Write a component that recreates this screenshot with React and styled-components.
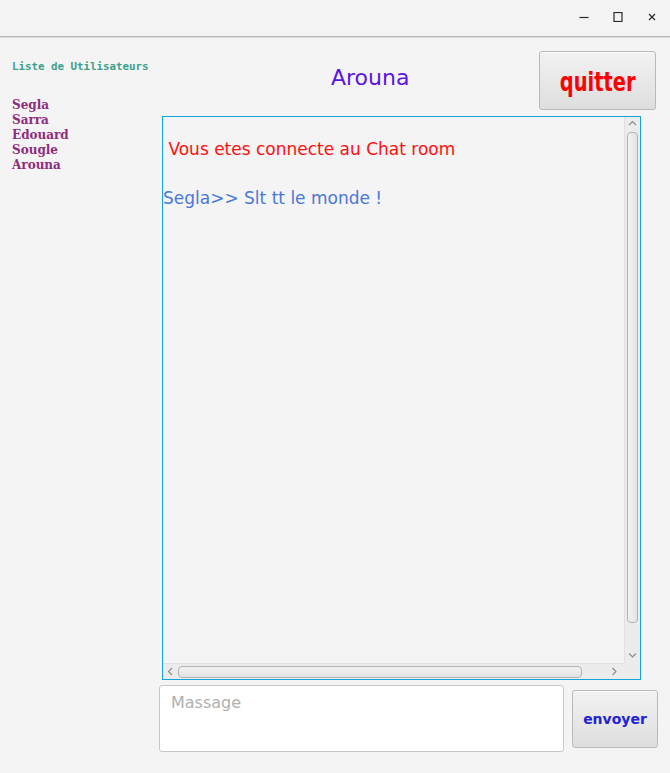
import React from 'react';
import styled, { createGlobalStyle } from 'styled-components';

const users = ['Segla', 'Sarra', 'Edouard', 'Sougle', 'Arouna'];

const messages = [
	{ text: ' Vous etes connecte au Chat room', color: '#ff1010' },
	{ text: 'Segla>> Slt tt le monde !', color: '#4a78d8' },
];

function Chevron({ dir }) {
	const paths = {
		up: 'M1 5 L4.5 1.5 L8 5',
		down: 'M1 1.5 L4.5 5 L8 1.5',
		left: 'M5 1 L1.5 4.5 L5 8',
		right: 'M1.5 1 L5 4.5 L1.5 8',
	};
	const vertical = dir === 'up' || dir === 'down';
	return (
		<svg width={vertical ? 9 : 7} height={vertical ? 7 : 9} viewBox={vertical ? '0 0 9 7' : '0 0 7 9'}>
			<path d={paths[dir]} fill="none" stroke="#8a8a8a" strokeWidth="1.1" />
		</svg>
	);
}

export default function App() {
	return (
		<>
			<GlobalStyle />
			<Window>
				<TitleBar>
					<WinButton aria-label="minimize">
						<svg width="10" height="10" viewBox="0 0 10 10">
							<path d="M0.5 5.5 H9.5" stroke="#2a2a2a" strokeWidth="1.2" />
						</svg>
					</WinButton>
					<WinButton aria-label="maximize">
						<svg width="10" height="10" viewBox="0 0 10 10">
							<rect x="1" y="0.5" width="8" height="9" fill="none" stroke="#2a2a2a" strokeWidth="1.2" />
						</svg>
					</WinButton>
					<WinButton aria-label="close">
						<svg width="10" height="10" viewBox="0 0 10 10">
							<path d="M2 2 L8 8 M8 2 L2 8" stroke="#2a2a2a" strokeWidth="1.2" />
						</svg>
					</WinButton>
				</TitleBar>
				<Body>
					<Sidebar>
						<SidebarTitle>Liste de Utilisateurs</SidebarTitle>
						<UserList>
							{users.map(u => (
								<UserItem key={u}>{u}</UserItem>
							))}
						</UserList>
					</Sidebar>
					<Main>
						<Header>
							<RoomTitle>Arouna</RoomTitle>
							<QuitButton>
								<QuitLabel>quitter</QuitLabel>
							</QuitButton>
						</Header>
						<ChatBox>
							<Feed>
								{messages.map((m, i) => (
									<Message key={i} color={m.color}>
										{m.text}
									</Message>
								))}
							</Feed>
							<VScroll>
								<Chevron dir="up" />
								<VThumb />
								<Chevron dir="down" />
							</VScroll>
							<HScroll>
								<Chevron dir="left" />
								<HThumb />
								<Chevron dir="right" />
							</HScroll>
							<Corner />
						</ChatBox>
						<Composer>
							<MessageInput placeholder="Massage" />
							<SendButton>envoyer</SendButton>
						</Composer>
					</Main>
				</Body>
			</Window>
		</>
	);
}

const GlobalStyle = createGlobalStyle`
	html, body {
		margin: 0;
		padding: 0;
		background: #f4f4f4;
	}
	* {
		box-sizing: border-box;
	}
`;

const Window = styled.div`
	width: 670px;
	height: 773px;
	display: flex;
	flex-direction: column;
	background: #f4f4f4;
	overflow: hidden;
`;

const TitleBar = styled.div`
	height: 37px;
	flex-shrink: 0;
	display: flex;
	justify-content: flex-end;
	align-items: center;
	padding: 0 8px 2px 0;
	gap: 14px;
	background: #f3f3f3;
	border-bottom: 1px solid #b8b8b8;
	box-shadow: 0 1px 0 #dcdcdc;
	border-radius: 6px 6px 0 0;
`;

const WinButton = styled.div`
	width: 20px;
	height: 20px;
	display: flex;
	align-items: center;
	justify-content: center;
`;

const Body = styled.div`
	flex: 1;
	display: grid;
	grid-template-columns: 159px 1fr;
`;

const Sidebar = styled.div`
	padding: 23px 0 0 12px;
	display: flex;
	flex-direction: column;
`;

const SidebarTitle = styled.div`
	font-family: 'DejaVu Sans Mono', monospace;
	font-size: 10.8px;
	font-weight: bold;
	line-height: 13px;
	color: #3e9f8c;
	white-space: nowrap;
`;

const UserList = styled.div`
	margin-top: 25px;
	display: flex;
	flex-direction: column;
`;

const UserItem = styled.div`
	font-family: 'DejaVu Serif', serif;
	font-size: 12px;
	font-weight: bold;
	line-height: 15px;
	color: #8f2c7d;
`;

const Main = styled.div`
	display: flex;
	flex-direction: column;
	padding-top: 14px;
`;

const Header = styled.div`
	height: 59px;
	display: flex;
	align-items: flex-start;
`;

const RoomTitle = styled.div`
	margin: 14px 0 0 172px;
	font-family: 'DejaVu Sans', sans-serif;
	font-size: 22px;
	line-height: 26px;
	color: #5a14e6;
`;

const BaseButton = styled.div`
	display: flex;
	align-items: center;
	justify-content: center;
	border: 1px solid #b9b9b9;
	border-radius: 3px;
	background: linear-gradient(#f2f2f2, #dedede);
	box-shadow: inset 0 1px 0 #fafafa;
`;

const QuitButton = styled(BaseButton)`
	margin: 0 14px 0 auto;
	width: 117px;
	height: 59px;
`;

const QuitLabel = styled.span`
	display: inline-block;
	font-family: 'DejaVu Sans', sans-serif;
	font-size: 27px;
	font-weight: bold;
	color: #ff0000;
	transform: scaleX(0.72);
	margin-top: 1px;
`;

const ChatBox = styled.div`
	margin: 6px 0 0 3px;
	width: 479px;
	height: 564px;
	border: 1px solid #16a2dc;
	display: grid;
	grid-template-columns: 1fr 16px;
	grid-template-rows: 1fr 16px;
	background: #f4f4f4;
`;

const Feed = styled.div`
	padding-top: 22px;
	display: flex;
	flex-direction: column;
	gap: 29px;
	overflow: hidden;
`;

const Message = styled.div`
	font-family: 'DejaVu Sans', sans-serif;
	font-size: 17px;
	line-height: 20px;
	white-space: pre;
	color: ${props => props.color};
`;

const VScroll = styled.div`
	background: #ececec;
	border-left: 1px solid #e0e0e0;
	display: flex;
	flex-direction: column;
	align-items: center;
	padding: 3px 0 4px;
	gap: 5px;
`;

const VThumb = styled.div`
	flex: 1;
	width: 11px;
	margin-bottom: 24px;
	border: 1px solid #b2b2b2;
	border-radius: 4px;
	background: linear-gradient(90deg, #f2f2f2, #e4e4e4);
`;

const HScroll = styled.div`
	background: #ececec;
	border-top: 1px solid #e0e0e0;
	display: flex;
	align-items: center;
	padding: 0 6px 0 4px;
	gap: 4px;
`;

const HThumb = styled.div`
	width: 404px;
	height: 12px;
	margin-right: auto;
	border: 1px solid #b2b2b2;
	border-radius: 4px;
	background: linear-gradient(#f2f2f2, #e2e2e2);
`;

const Corner = styled.div`
	background: #ececec;
`;

const Composer = styled.div`
	margin-top: 5px;
	display: flex;
	align-items: flex-start;
`;

const MessageInput = styled.textarea`
	width: 405px;
	height: 67px;
	resize: none;
	border: 1px solid #c8c8c8;
	border-radius: 3px;
	background: #ffffff;
	padding: 7px 11px;
	font-family: 'DejaVu Sans', sans-serif;
	font-size: 16px;
	line-height: 19px;
	outline: none;

	&::placeholder {
		color: #b0b0b0;
	}
`;

const SendButton = styled(BaseButton)`
	margin: 5px 0 0 8px;
	width: 86px;
	height: 58px;
	font-family: 'DejaVu Sans', sans-serif;
	font-size: 14px;
	font-weight: bold;
	color: #2323d6;
`;
